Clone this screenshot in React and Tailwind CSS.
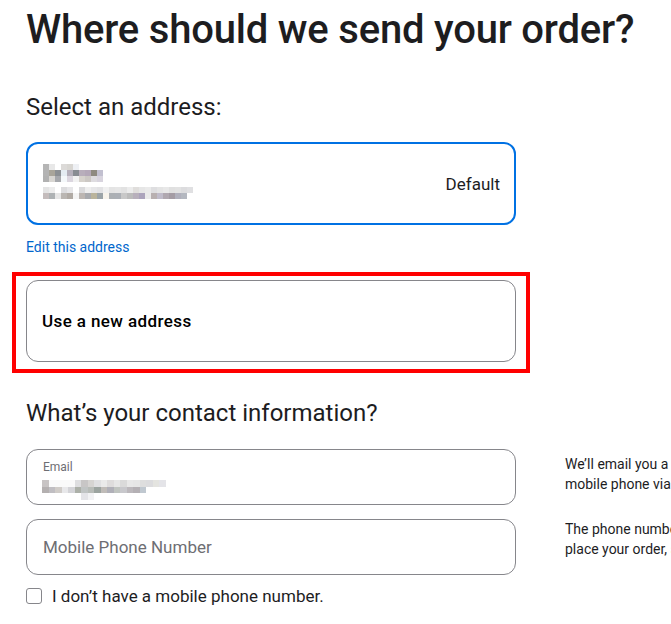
import React from "react";

const nameBlocks = [
  ["#b5b5b5", "#e8e8e8", "#ffffff", "#dcdad8", "#d8d6d2", "#eef0f4", "#ffffff", "#ffffff", "#ffffff", "#ffffff", "#ffffff"],
  ["#b3b3b3", "#a9a59a", "#8c9094", "#e4ecf2", "#b5b0bb", "#888c92", "#b8aebb", "#b4a8b8", "#8e8a80", "#c2c0d0", "#ffffff"],
  ["#b1b1b1", "#d8d6d2", "#a6a8ac", "#f4f8fa", "#dbd6df", "#f2f2f2", "#d6d2cc", "#ccc8c4", "#dedce0", "#d8d4de", "#ffffff"],
];

const addrBlocks = [
  ["#e4e4e4", "#ececec", "#ffffff", "#dcdcde", "#e6e6e8", "#ffffff", "#dadadc", "#eeeeee", "#e6e6e8", "#e2e2e4", "#f0f0f0", "#e4e4e4", "#e6e6e6", "#e2e2e2", "#ececec", "#e0dedc", "#e6e6e6", "#eaeaea", "#dedee0", "#e4e4e4", "#e8e8e8", "#e0e0e0", "#e2e2e2", "#dcdcde", "#e0e0e2"],
  ["#c4bcbc", "#aeb2b4", "#e6e6e6", "#bab6b2", "#b0aaa4", "#f4f4f4", "#bcb6b2", "#a8aaae", "#bab49c", "#9ca4a8", "#f8f4ec", "#acb0b4", "#acb0b6", "#c8c8c8", "#bcbcbc", "#b8b0bc", "#aca4bc", "#eaeaea", "#b8b0b0", "#c0bcca", "#b0a8b0", "#a49ca4", "#b0b0bc", "#b4b8c0", "#ffffff"],
  ["#ffffff", "#ffffff", "#ffffff", "#ffffff", "#ffffff", "#ffffff", "#ffffff", "#ffffff", "#ffffff", "#ffffff", "#ffffff", "#ffffff", "#ffffff", "#ffffff", "#ffffff", "#ffffff", "#ffffff", "#ffffff", "#ffffff", "#ffffff", "#ffffff", "#ffffff", "#ffffff", "#ffffff", "#ffffff"],
];

const emailBlocks = [
  ["#c8c4c4", "#fafafa", "#fafafa", "#fafafa", "#fafafa", "#dedee0", "#c8c6c6", "#d6d4d2", "#e0e0e2", "#eaeaea", "#dedcdc", "#e6e6e6", "#dadada", "#e8e8e8", "#e6e6e6", "#dedede", "#dcdcde", "#e4e4e0", "#e4e4e8", "#ffffff"],
  ["#b4b0b0", "#c0bec2", "#d0ccc8", "#e8e8ea", "#d4d4d8", "#acb0a8", "#c0c4c4", "#b8bcb8", "#9ca4a0", "#c0bcb8", "#b0b0b8", "#c0c4c0", "#c8c8cc", "#bcb8bc", "#b4b0b4", "#c0c8d0", "#ffffff", "#ffffff", "#ffffff", "#ffffff"],
  ["#ffffff", "#ffffff", "#ffffff", "#ffffff", "#ffffff", "#ffffff", "#e4e4e8", "#f2f2f4", "#ffffff", "#ffffff", "#ffffff", "#ffffff", "#ffffff", "#ffffff", "#ffffff", "#ffffff", "#ffffff", "#ffffff", "#ffffff", "#ffffff"],
];

// pixelated placeholder for the blurred personal details
const Mosaic = ({ rows, size = 6 }) => (
  <div className="flex flex-col">
    {rows.map((row, i) => (
      <div key={i} className="flex">
        {row.map((c, j) => (
          <span key={j} style={{ width: size, height: size, background: c }} />
        ))}
      </div>
    ))}
  </div>
);

const App = () => {
  return (
    <div className="w-[671px] h-[624px] overflow-hidden bg-white text-[#1d1d1f] font-['Roboto',sans-serif]">
      <div className="pl-[26px] w-[1000px]">
        {/* Title */}
        <h1 className="pt-[6px] text-[40px] leading-[48px] font-medium tracking-[-0.2px]">
          Where should we send your order?
        </h1>

        {/* Address selection */}
        <h2 className="mt-[38px] text-[24px] leading-[30px] font-normal">Select an address:</h2>

        <div className="w-[490px]">
          <div className="mt-[20px] h-[83px] rounded-[12px] border-2 border-[#0071e3] flex items-center justify-between pl-[15px] pr-[14px]">
            <div className="flex flex-col gap-[5px] pt-[2px]">
              <Mosaic rows={nameBlocks} />
              <Mosaic rows={addrBlocks} />
            </div>
            <span className="text-[17px] leading-[22px] text-[#1d1d1f]">Default</span>
          </div>

          <a className="block mt-[13px] text-[14px] leading-[18px] text-[#0066cc]">Edit this address</a>

          {/* Highlighted new-address card */}
          <div className="mt-[16px] -mx-[14px] border-[4px] border-[#ff0000] px-[10px] pt-[4px] pb-[7px]">
            <div className="h-[82px] rounded-[12px] border border-[#86868b] flex items-center pl-[15px]">
              <span className="text-[17px] leading-[22px] font-medium tracking-[0.4px] text-black">Use a new address</span>
            </div>
          </div>
        </div>

        {/* Contact information */}
        <h2 className="mt-[25px] text-[24px] leading-[30px] font-normal">What’s your contact information?</h2>

        <div className="mt-[21px] flex gap-[49px]">
          <div className="w-[490px] flex flex-col gap-[14px]">
            <div className="h-[56px] rounded-[12px] border border-[#86868b] pl-[16px] pt-[9px]">
              <div className="text-[12px] leading-[16px] text-[#6e6e73]">Email</div>
              <div className="mt-[5px] -ml-[1px]">
                <Mosaic rows={emailBlocks} size={6.5} />
              </div>
            </div>
            <div className="h-[56px] rounded-[12px] border border-[#86868b] pl-[16px] flex items-center">
              <span className="text-[17px] leading-[22px] text-[#6e6e73]">Mobile Phone Number</span>
            </div>
          </div>
          <div className="w-[420px] text-[14px] leading-[20px] text-[#1d1d1f] flex flex-col whitespace-nowrap">
            <p className="pt-[5px]">
              We’ll email you a receipt and send order updates to your
              <br />
              mobile phone via SMS or iMessage.
            </p>
            <p className="mt-[25px]">
              The phone number you enter can’t be changed after you
              <br />
              place your order, so please make sure it’s correct.
            </p>
          </div>
        </div>

        <label className="mt-[10px] flex items-center gap-[10px]">
          <span className="w-[16px] h-[16px] rounded-[3px] border border-[#86868b] bg-white" />
          <span className="text-[17px] leading-[22px] text-[#1d1d1f]">I don’t have a mobile phone number.</span>
        </label>
      </div>
    </div>
  );
};

export default App;
